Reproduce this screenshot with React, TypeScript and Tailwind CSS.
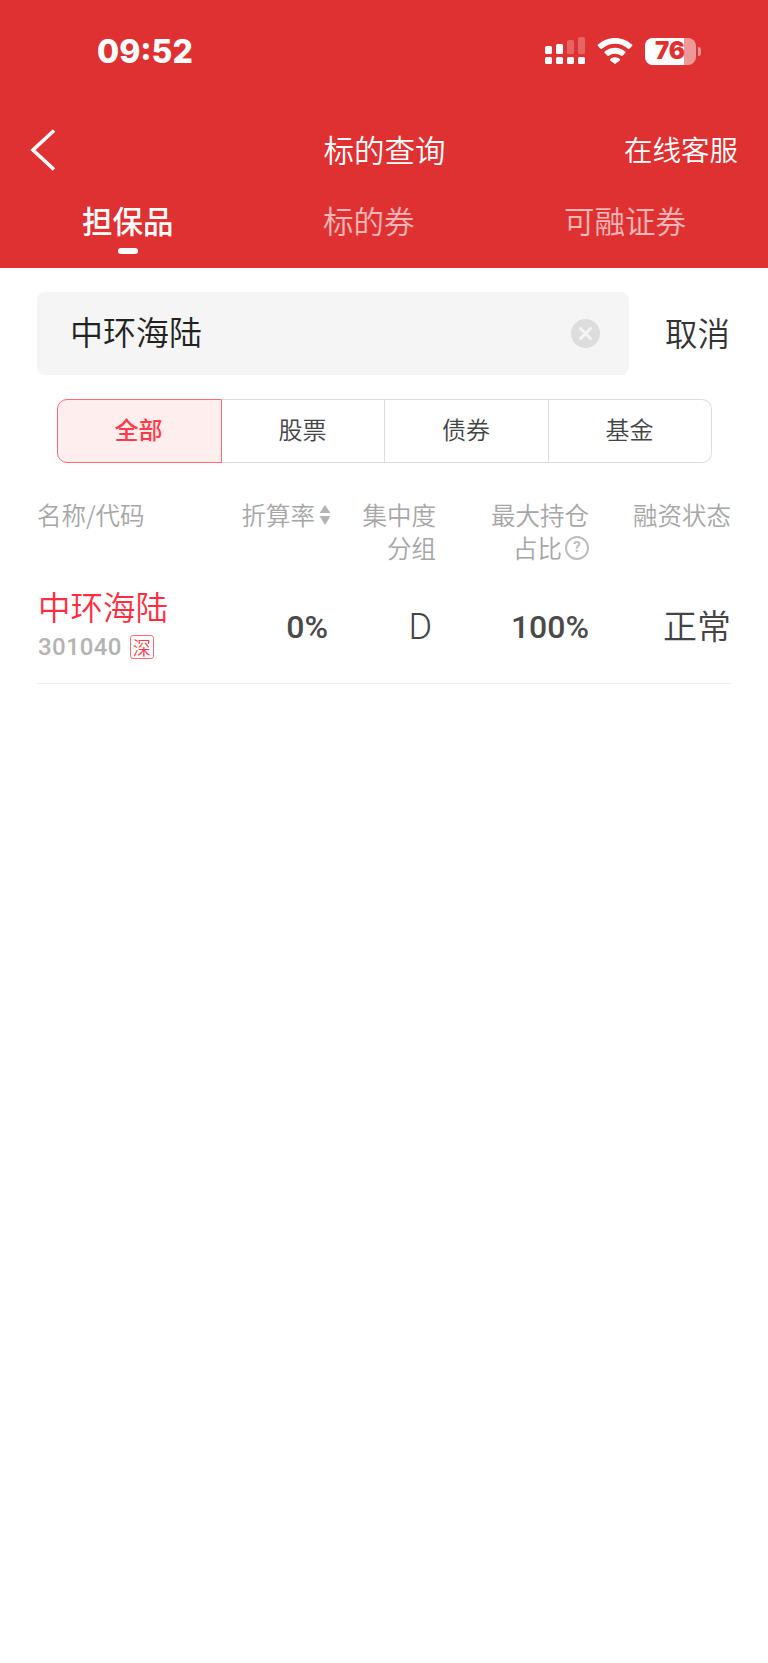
import React from 'react';

const cjk = '"Noto Sans CJK SC", "Noto Sans", sans-serif';

// Status bar cellular dots, two of the bars are dimmed
function SignalIcon() {
  return (
    <svg width="40" height="28" viewBox="0 0 40 28" fill="#fff">
      <rect x="0" y="9" width="7" height="8" rx="1.500" />
      <rect x="11" y="7" width="7" height="10" rx="1.500" />
      <rect x="22" y="3" width="7" height="14" rx="1.500" opacity="0.25" />
      <rect x="33" y="0" width="7" height="17" rx="1.500" opacity="0.25" />
      <rect x="0" y="20" width="7" height="7" rx="1.500" />
      <rect x="11" y="20" width="7" height="7" rx="1.500" />
      <rect x="22" y="20" width="7" height="7" rx="1.500" />
      <rect x="33" y="20" width="7" height="7" rx="1.500" />
    </svg>
  );
}

function WifiIcon() {
  return (
    <svg width="36" height="26" viewBox="0 0 36 26" fill="#fff">
      <path d="M18 0C11.500 0 5.600 2.500 1 6.600c-.5.400-.5 1.100 0 1.500l2.600 2.700c.4.400 1 .400 1.400 0C8.500 7.600 13 5.700 18 5.700s9.500 1.900 13 5.100c.4.400 1 .400 1.400 0L35 8.100c.5-.4.500-1.100 0-1.500C30.400 2.500 24.500 0 18 0z" />
      <path d="M18 9.700c-3.900 0-7.500 1.500-10.200 3.900-.5.400-.5 1.100 0 1.500l2.700 2.700c.4.400 1 .400 1.400 0 1.600-1.300 3.700-2.100 6.100-2.100s4.500.8 6.100 2.100c.4.400 1 .400 1.400 0l2.700-2.700c.5-.4.500-1.100 0-1.500C25.500 11.200 21.900 9.700 18 9.700z" />
      <path d="M18 19.200c-1.900 0-3.600.7-4.800 1.800-.4.400-.4 1 0 1.400l4 3.200c.4.400 1.200.400 1.600 0l4-3.200c.4-.4.400-1 0-1.400-1.200-1.100-2.900-1.800-4.800-1.800z" />
    </svg>
  );
}

function Battery() {
  return (
    <div className="flex items-center">
      <div className="relative flex h-[27px] w-[51px] rounded-[8px] bg-white/50">
        <div className="h-full w-[39px] rounded-l-[8px] bg-white" />
        <span
          className="absolute inset-0 flex items-center justify-center pr-[1px] text-[24px] leading-none font-black text-[#DF3131]"
          style={{ fontFamily: 'Inter, sans-serif' }}
        >
          76
        </span>
      </div>
      <div className="ml-[2px] h-[9px] w-[3px] rounded-r-full bg-white/50" />
    </div>
  );
}

function StatusBar() {
  return (
    <div className="flex h-[112px] items-start pt-[32px] pl-[97px]">
      <span
        className="text-[32px] leading-[40px] font-extrabold text-white"
        style={{ fontFamily: 'Inter, sans-serif' }}
      >
        09:52
      </span>
      <div className="ml-auto flex items-center gap-[12px] pt-[5px] pr-[67px]">
        <SignalIcon />
        <WifiIcon />
        <Battery />
      </div>
    </div>
  );
}

function NavBar() {
  return (
    <div className="flex h-[76px] items-center pr-[30px] pl-[30px] text-white">
      <svg width="26" height="42" viewBox="0 0 26 42" fill="none" stroke="#fff" strokeWidth="3.600">
        <path d="M24 1.500 L3 21 L24 40.500" />
      </svg>
      <span className="mb-[2px] ml-[267.500px] text-[30.500px] leading-[40px]">标的查询</span>
      <span className="mb-[2px] ml-auto text-[28.500px] leading-[40px]">在线客服</span>
    </div>
  );
}

function Tabs() {
  return (
    <div className="flex h-[80px] items-start pt-[12px] text-[30.500px] leading-[40px]">
      <div className="ml-[82px] flex flex-col items-center font-medium text-white">
        <span>担保品</span>
        <div className="mt-[8px] h-[6px] w-[20px] rounded-full bg-white" />
      </div>
      <span className="ml-[149.500px] text-white/65">标的券</span>
      <span className="ml-[149.500px] text-white/65">可融证券</span>
    </div>
  );
}

function SearchBar() {
  return (
    <div className="flex h-[123px] items-start rounded-b-[10px] bg-white pt-[24px] pl-[37px]">
      <div className="flex h-[83px] w-[592px] items-center rounded-[8px] bg-[#F5F5F5] pr-[29px] pl-[33px]">
        <span className="mb-[4px] text-[33px] leading-none text-[#222]">中环海陆</span>
        <svg className="ml-auto" width="29" height="29" viewBox="0 0 29 29">
          <circle cx="14.500" cy="14.500" r="14.500" fill="#DDD" />
          <path d="M9.500 9.500 L19.500 19.500 M19.500 9.500 L9.500 19.500" stroke="#F5F5F5" strokeWidth="3" strokeLinecap="round" />
        </svg>
      </div>
      <span className="ml-[36px] self-start pt-[18px] text-[32.500px] leading-[44px] text-[#333]">取消</span>
    </div>
  );
}

function Segments() {
  return (
    <div className="mt-[8px] ml-[57px] flex h-[64px] w-[655px] text-[24px] text-[#444]">
      <div className="flex w-[165px] items-center justify-center rounded-l-[10px] border-[1.500px] border-[#FF6B75] bg-[#FEEEEE] pr-[2px] pb-[5px] font-medium text-[#FF3B4A]">
        全部
      </div>
      <div className="flex w-[163px] items-center justify-center border-y-[1.500px] border-r-[1.500px] border-[#DDD] pr-[1px] pb-[5px]">
        股票
      </div>
      <div className="flex w-[164px] items-center justify-center border-y-[1.500px] border-r-[1.500px] border-[#DDD] pr-[1px] pb-[5px]">
        债券
      </div>
      <div className="flex w-[163px] items-center justify-center rounded-r-[10px] border-y-[1.500px] border-r-[1.500px] border-[#DDD] pr-[1px] pb-[5px]">
        基金
      </div>
    </div>
  );
}

function SortIcon() {
  return (
    <svg width="12" height="20" viewBox="0 0 12 20" fill="#B5B5B5">
      <path d="M6 0 L11.500 8 H0.500 Z" />
      <path d="M6 20 L11.500 11 H0.500 Z" />
    </svg>
  );
}

function TableHeader() {
  return (
    <div className="mt-[35px] grid grid-cols-[206px_88px_105px_153px_142px] text-[24.500px] leading-[33px] text-[#A6A6A6]">
      <span>名称/代码</span>
      <div className="flex items-start justify-end whitespace-nowrap">
        <span>折算率</span>
        <span className="mt-[7px] ml-[4px]">
          <SortIcon />
        </span>
      </div>
      <span className="text-right">
        集中度
        <br />
        分组
      </span>
      <div className="flex flex-col items-end">
        <span>最大持仓</span>
        <div className="flex items-center">
          <span>占比</span>
          <span
            className="ml-[3px] flex h-[24px] w-[24px] items-center justify-center rounded-full border-2 border-[#BDBDBD] text-[15px] leading-none font-bold text-[#BDBDBD]"
            style={{ fontFamily: 'Roboto, sans-serif' }}
          >
            ?
          </span>
        </div>
      </div>
      <span className="text-right">融资状态</span>
    </div>
  );
}

function Row() {
  const din = { fontFamily: 'Roboto, sans-serif' };
  return (
    <div className="mt-[15px] grid h-[105px] grid-cols-[206px_88px_105px_153px_142px] items-center border-b border-[#EEE] pb-[9px] text-[#444]">
      <div className="mb-[12px] flex flex-col pl-[1px]">
        <span className="text-[32.500px] leading-[52px] text-[#FF2D3F]">中环海陆</span>
        <div className="flex items-center">
          <span className="text-[24px] leading-[30px] font-medium tracking-[0.3px] text-[#B3B3B3]" style={din}>
            301040
          </span>
          <span className="ml-[8px] flex h-[24px] w-[24px] items-center justify-center rounded-[3px] border border-[#FF6B75] text-[18px] leading-none text-[#FF3B4A]">
            深
          </span>
        </div>
      </div>
      <span className="pr-[3px] text-right text-[32px] font-medium text-[#4A4A4A]" style={din}>
        0%
      </span>
      <span className="pr-[4px] text-right text-[36px] font-light" style={din}>
        D
      </span>
      <span className="text-right text-[32px] font-medium text-[#4A4A4A]" style={din}>
        100%
      </span>
      <span className="mb-[4px] text-right text-[34px] leading-[44px]">正常</span>
    </div>
  );
}

export default function App() {
  return (
    <div className="min-h-[1663px] w-[768px] bg-white font-[350]" style={{ fontFamily: cjk }}>
      <div className="bg-[#DF3131]">
        <StatusBar />
        <NavBar />
        <Tabs />
      </div>
      <SearchBar />
      <Segments />
      <div className="px-[37px]">
        <TableHeader />
        <Row />
      </div>
    </div>
  );
}
